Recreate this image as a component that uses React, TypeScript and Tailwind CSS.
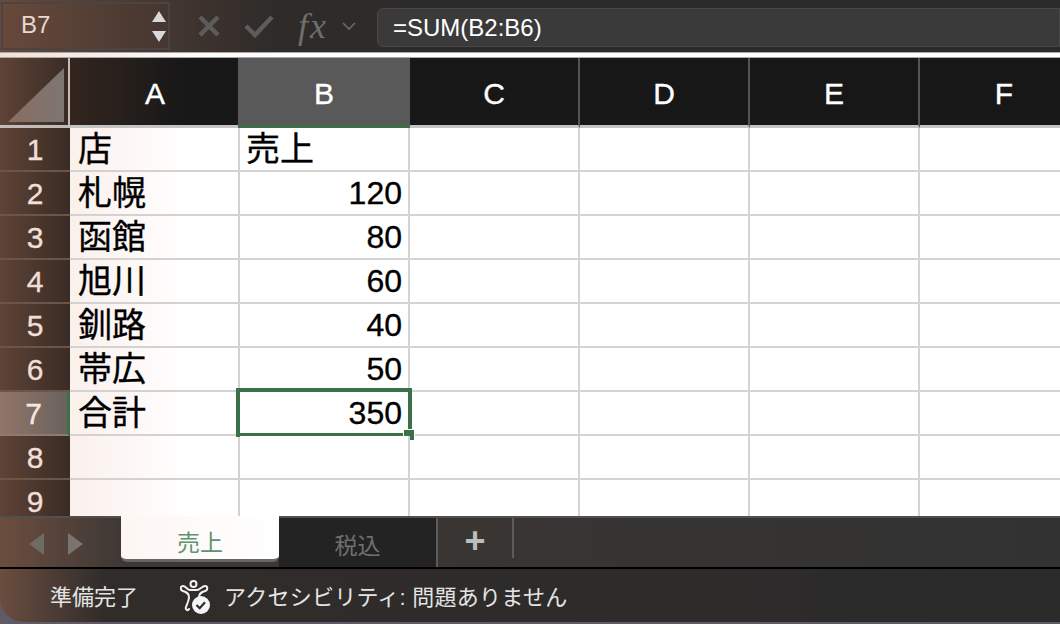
import React from 'react';

const font = { fontFamily: '"Liberation Sans", "Noto Sans CJK JP", sans-serif' };

const columns = ['A', 'B', 'C', 'D', 'E', 'F'];

const rows: [string, string][] = [
  ['店', '売上'],
  ['札幌', '120'],
  ['函館', '80'],
  ['旭川', '60'],
  ['釧路', '40'],
  ['帯広', '50'],
  ['合計', '350'],
  ['', ''],
  ['', ''],
];

function AccessibilityIcon() {
  return (
    <svg width="32" height="36" viewBox="0 0 32 36" fill="none">
      <circle cx="13.5" cy="5" r="3" stroke="#f0f0f0" strokeWidth="2" />
      <path
        d="M10 11h7c3 0 5-4 8-4 3 0 3 4 0 5-3 1-6 2-6 6v2M10 11C7 11 6 7 3 7c-3 0-3 4 0 5 3 1 6 2 6 6 0 4-2 7-3 10-1 3 2 4 3 2"
        stroke="#f0f0f0"
        strokeWidth="2"
        strokeLinecap="round"
      />
      <circle cx="21" cy="26" r="9" fill="#f4f4f4" />
      <path d="M16.5 26l3.2 3.2 5.3-6" stroke="#2b2b2b" strokeWidth="2.2" fill="none" />
    </svg>
  );
}

function FormulaBar() {
  return (
    <div className="flex h-[52px] shrink-0 bg-gradient-to-r from-[#68493b] via-[#2e2b29] via-[26%] to-[#2a2a2a]">
      <div className="mt-[2px] ml-[1px] flex h-[48px] w-[169px] items-center justify-between border-2 border-[#4a4542] pr-[2px] pb-[3px] pl-[18px] text-[24px] text-[#e8d8d0]">
        <span>B7</span>
        <div className="flex flex-col gap-[9px] pt-[3px]">
          <div className="h-0 w-0 border-x-[7px] border-b-[11px] border-x-transparent border-b-[#d8d8d8]" />
          <div className="h-0 w-0 border-x-[7px] border-t-[11px] border-x-transparent border-t-[#d8d8d8]" />
        </div>
      </div>
      <div className="flex w-[207px] items-center">
        <svg className="ml-[27px]" width="24" height="24" viewBox="0 0 24 24">
          <path d="M3 3l18 18M21 3L3 21" stroke="#5c5c5c" strokeWidth="4.5" />
        </svg>
        <svg className="ml-[23px]" width="30" height="24" viewBox="0 0 30 24">
          <path d="M2 12l9 9L28 3" stroke="#5c5c5c" strokeWidth="4.5" fill="none" />
        </svg>
        <span
          className="ml-[24px] text-[36px] tracking-[2px] text-[#6e6e6e] italic"
          style={{ fontFamily: '"Liberation Serif", serif' }}
        >
          fx
        </span>
        <svg className="ml-[14px]" width="14" height="9" viewBox="0 0 14 9">
          <path d="M1 1l6 6 6-6" stroke="#6a6a6a" strokeWidth="1.6" fill="none" />
        </svg>
      </div>
      <div className="mt-[8px] flex h-[39px] flex-1 items-center rounded-l-md border border-[#484848] bg-[#3a3a3a] pl-[15px] text-[24px] text-white">
        =SUM(B2:B6)
      </div>
    </div>
  );
}

function Sheet() {
  return (
    <div className="min-h-0 flex-1 overflow-hidden">
      <div className="grid w-[1090px] grid-cols-[70px_170px_170px_170px_170px_170px_170px] [-webkit-text-stroke:0.35px]">
        <div className="h-[70px] border-r-2 border-b-[3px] border-r-[#c9b9b2] border-b-[#c4bcb8] bg-gradient-to-r from-[#5f4336] to-[#392c25] p-[8px_3px_3px_6px]">
          <svg width="59" height="56" viewBox="0 0 59 56">
            <defs>
              <linearGradient id="corner" x1="0" x2="1" y1="0" y2="0">
                <stop offset="0" stopColor="#8a6d60" />
                <stop offset="1" stopColor="#7d7673" />
              </linearGradient>
            </defs>
            <path d="M2 56L58 2v54z" fill="url(#corner)" />
          </svg>
        </div>
        {columns.map((col, i) => (
          <div
            key={col}
            className={
              col === 'B'
                ? '-ml-[2px] flex h-[70px] items-center justify-center border-b-[3px] border-b-[#3c7049] bg-[#595959] pt-[3px] text-[30px] text-white'
                : i === 0
                  ? 'flex h-[70px] items-center justify-center border-b-[3px] border-b-[#c4c4c4] bg-gradient-to-r from-[#33261f] to-[#181818] to-[65%] pt-[3px] text-[30px] text-white'
                  : 'flex h-[70px] items-center justify-center border-r-2 border-b-[3px] border-r-[#555] border-b-[#c4c4c4] bg-[#171717] pt-[3px] text-[30px] text-white'
            }
          >
            {col}
          </div>
        ))}
        {rows.map(([shop, sales], i) => {
          const active = i === 6;
          return (
            <React.Fragment key={i}>
              <div
                className={
                  active
                    ? 'flex h-[44px] items-center justify-center border-r-[3px] border-b-2 border-r-[#3c7049] border-b-[#8f7a70] bg-gradient-to-r from-[#927568] to-[#6a625e] text-[30px] text-[#f3e6df]'
                    : 'flex h-[44px] items-center justify-center border-b-2 border-b-[#6b5549] bg-gradient-to-r from-[#5f4336] to-[#392c25] text-[30px] text-[#f0dfd7]'
                }
              >
                {i + 1}
              </div>
              <div className="flex h-[44px] items-center border-r-2 border-b-2 border-[#d4d2d1] bg-gradient-to-r from-[#faf0ec] to-white to-[70%] pl-[8px] text-[34px] text-black">
                {shop}
              </div>
              <div
                className={
                  i === 0
                    ? 'flex h-[44px] items-center border-r-2 border-b-2 border-[#d4d4d4] bg-white pl-[6px] text-[34px] text-black'
                    : 'relative flex h-[44px] items-center justify-end border-r-2 border-b-2 border-[#d4d4d4] bg-white pr-[6px] text-[32px] text-black'
                }
              >
                {sales}
                {active && (
                  <>
                    <div className="absolute -top-[4px] -right-[4px] -bottom-[3px] -left-[4px] border-[4px] border-[#3c7049]" />
                    <div className="absolute -right-[7px] -bottom-[7px] h-[12px] w-[12px] border border-white bg-[#3c7049]" />
                  </>
                )}
              </div>
              {[0, 1, 2, 3].map((c) => (
                <div key={c} className="h-[44px] border-r-2 border-b-2 border-[#d4d4d4] bg-white" />
              ))}
            </React.Fragment>
          );
        })}
      </div>
    </div>
  );
}

function TabBar() {
  return (
    <div className="flex h-[53px] shrink-0 border-t-2 border-b-2 border-t-[#505050] border-b-black bg-gradient-to-r from-[#6b4d3f] via-[#3c3734] via-[12%] to-[#323232]">
      <div className="flex w-[121px] items-center pt-[2px] pl-[29px]">
        <div className="h-0 w-0 border-y-[11px] border-r-[15px] border-y-transparent border-r-[#706a67]" />
        <div className="ml-[24px] h-0 w-0 border-y-[11px] border-l-[15px] border-y-transparent border-l-[#7a7471]" />
      </div>
      <div className="-mt-[2px] flex h-[46px] w-[158px] items-center justify-center rounded-b-md border-b-[3px] border-b-[#666] bg-gradient-to-r from-[#fdf6f3] to-white pt-[12px] text-[23px] text-[#5a9470]">
        売上
      </div>
      <div className="flex w-[159px] items-center justify-center border-r-2 border-r-[#5c5c5c] bg-[#232323] pt-[8px] text-[23px] text-[#6f6f6f]">
        税込
      </div>
      <div className="mb-[9px] flex w-[76px] items-center justify-center border-r-2 border-r-[#5c5c5c] pt-[5px] text-[36px] leading-none font-bold text-[#bdbdbd]">
        +
      </div>
    </div>
  );
}

function StatusBar() {
  return (
    <div className="flex h-[53px] shrink-0 items-center bg-gradient-to-r from-[#6b4d3f] via-[#302c2a] via-[10%] to-[#2b2b2b] pt-[3px] pl-[50px] text-[22px] text-[#e4e4e4]">
      <span>準備完了</span>
      <span className="mr-[12px] ml-[42px] flex">
        <AccessibilityIcon />
      </span>
      <span className="tracking-[0.25px]">アクセシビリティ: 問題ありません</span>
    </div>
  );
}

export default function App() {
  return (
    <div className="h-[624px] w-[1060px] overflow-hidden bg-[#5e5a66]" style={font}>
      <div className="flex h-[622px] flex-col overflow-hidden rounded-bl-[24px]">
        <FormulaBar />
        <div className="h-[6px] shrink-0 border-y border-y-[#a8a8a8] bg-gradient-to-r from-[#f3dfd7] to-white to-[20%]" />
        <Sheet />
        <TabBar />
        <StatusBar />
      </div>
    </div>
  );
}
